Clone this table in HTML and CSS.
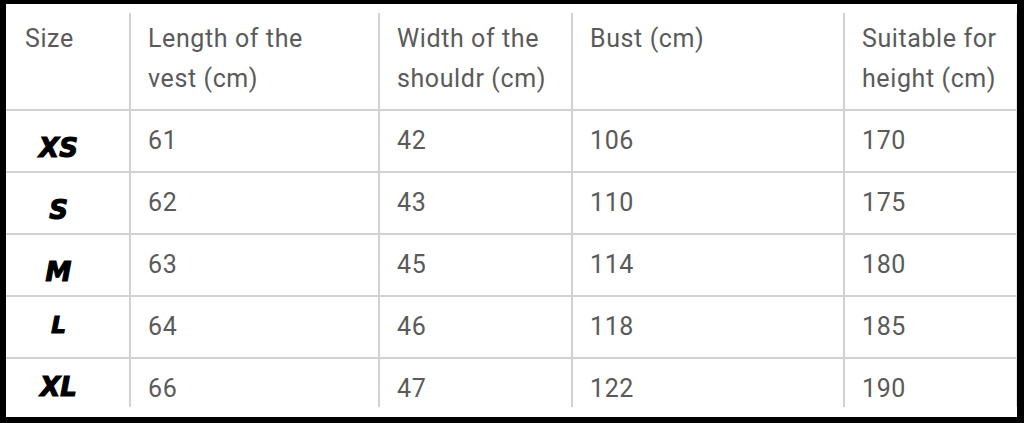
FILE: index.html
```html
<!DOCTYPE html>
<html>
<head>
<meta charset="utf-8">
<link rel="stylesheet" href="styles.css">
</head>
<body>
<div class="frame">
  <div class="table">
    <div class="cell head">Size</div>
    <div class="cell head line">Length of the<br>vest (cm)</div>
    <div class="cell head line">Width of the<br>shouldr (cm)</div>
    <div class="cell head line">Bust (cm)</div>
    <div class="cell head line last-col">Suitable for<br>height (cm)</div>

    <div class="cell size">XS</div>
    <div class="cell data line">61</div>
    <div class="cell data line">42</div>
    <div class="cell data line">106</div>
    <div class="cell data line last-col">170</div>

    <div class="cell size">S</div>
    <div class="cell data line">62</div>
    <div class="cell data line">43</div>
    <div class="cell data line">110</div>
    <div class="cell data line last-col">175</div>

    <div class="cell size">M</div>
    <div class="cell data line">63</div>
    <div class="cell data line">45</div>
    <div class="cell data line">114</div>
    <div class="cell data line last-col">180</div>

    <div class="cell size size-up size-small">L</div>
    <div class="cell data line">64</div>
    <div class="cell data line">46</div>
    <div class="cell data line">118</div>
    <div class="cell data line last-col">185</div>

    <div class="cell size size-up end">XL</div>
    <div class="cell data line end">66</div>
    <div class="cell data line end">47</div>
    <div class="cell data line end">122</div>
    <div class="cell data line last-col end">190</div>
  </div>
</div>
</body>
</html>
```

FILE: styles.css
```css
html, body {
  margin: 0;
  padding: 0;
  background: #000;
}

.frame {
  width: 1024px;
  height: 423px;
  box-sizing: border-box;
  border-style: solid;
  border-color: #000;
  border-width: 4px 7px 6px 6px;
  background: #fff;
  overflow: hidden;
}

.table {
  margin-top: 9px;
  display: grid;
  grid-template-columns: 123px 249px 193px 272px 174px;
  grid-template-rows: 98px 62px 62px 62px 62px 48px;
  font-family: Roboto, "Liberation Sans", sans-serif;
  font-size: 25px;
  letter-spacing: 0.6px;
  line-height: 40px;
  color: #5a5a5a;
}

.cell {
  box-sizing: border-box;
  border-bottom: 2px solid #d2d2d2;
  padding-left: 19px;
}

.cell.end {
  border-bottom: none;
}

.line {
  border-left: 2px solid #d2d2d2;
  padding-left: 17px;
}

.last-col {
  border-right: 1px solid #e4e4e4;
}

.head {
  padding-top: 6px;
}

.data {
  padding-top: 10px;
}

.size {
  padding-left: 0;
  padding-right: 18px;
  padding-top: 22px;
  text-align: center;
  font-family: "DejaVu Sans", sans-serif;
  font-weight: bold;
  font-style: italic;
  font-size: 26px;
  letter-spacing: 0;
  line-height: 30px;
  color: #000;
  -webkit-text-stroke: 1.2px #000;
}

.size-up {
  padding-top: 13px;
}

.size-small {
  font-size: 23px;
}
```
